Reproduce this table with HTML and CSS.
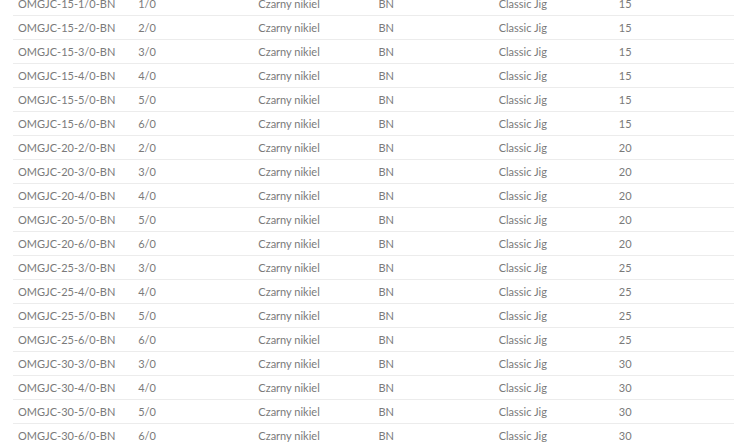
FILE: index.html
```html
<!DOCTYPE html>
<html>
<head>
<meta charset="utf-8">
<link rel="stylesheet" href="styles.css">
</head>
<body>
<table class="spec">
<tbody>
<tr><td>OMGJC-15-1/0-BN</td><td>1/0</td><td>Czarny nikiel</td><td>BN</td><td>Classic Jig</td><td>15</td></tr>
<tr><td>OMGJC-15-2/0-BN</td><td>2/0</td><td>Czarny nikiel</td><td>BN</td><td>Classic Jig</td><td>15</td></tr>
<tr><td>OMGJC-15-3/0-BN</td><td>3/0</td><td>Czarny nikiel</td><td>BN</td><td>Classic Jig</td><td>15</td></tr>
<tr><td>OMGJC-15-4/0-BN</td><td>4/0</td><td>Czarny nikiel</td><td>BN</td><td>Classic Jig</td><td>15</td></tr>
<tr><td>OMGJC-15-5/0-BN</td><td>5/0</td><td>Czarny nikiel</td><td>BN</td><td>Classic Jig</td><td>15</td></tr>
<tr><td>OMGJC-15-6/0-BN</td><td>6/0</td><td>Czarny nikiel</td><td>BN</td><td>Classic Jig</td><td>15</td></tr>
<tr><td>OMGJC-20-2/0-BN</td><td>2/0</td><td>Czarny nikiel</td><td>BN</td><td>Classic Jig</td><td>20</td></tr>
<tr><td>OMGJC-20-3/0-BN</td><td>3/0</td><td>Czarny nikiel</td><td>BN</td><td>Classic Jig</td><td>20</td></tr>
<tr><td>OMGJC-20-4/0-BN</td><td>4/0</td><td>Czarny nikiel</td><td>BN</td><td>Classic Jig</td><td>20</td></tr>
<tr><td>OMGJC-20-5/0-BN</td><td>5/0</td><td>Czarny nikiel</td><td>BN</td><td>Classic Jig</td><td>20</td></tr>
<tr><td>OMGJC-20-6/0-BN</td><td>6/0</td><td>Czarny nikiel</td><td>BN</td><td>Classic Jig</td><td>20</td></tr>
<tr><td>OMGJC-25-3/0-BN</td><td>3/0</td><td>Czarny nikiel</td><td>BN</td><td>Classic Jig</td><td>25</td></tr>
<tr><td>OMGJC-25-4/0-BN</td><td>4/0</td><td>Czarny nikiel</td><td>BN</td><td>Classic Jig</td><td>25</td></tr>
<tr><td>OMGJC-25-5/0-BN</td><td>5/0</td><td>Czarny nikiel</td><td>BN</td><td>Classic Jig</td><td>25</td></tr>
<tr><td>OMGJC-25-6/0-BN</td><td>6/0</td><td>Czarny nikiel</td><td>BN</td><td>Classic Jig</td><td>25</td></tr>
<tr><td>OMGJC-30-3/0-BN</td><td>3/0</td><td>Czarny nikiel</td><td>BN</td><td>Classic Jig</td><td>30</td></tr>
<tr><td>OMGJC-30-4/0-BN</td><td>4/0</td><td>Czarny nikiel</td><td>BN</td><td>Classic Jig</td><td>30</td></tr>
<tr><td>OMGJC-30-5/0-BN</td><td>5/0</td><td>Czarny nikiel</td><td>BN</td><td>Classic Jig</td><td>30</td></tr>
<tr><td>OMGJC-30-6/0-BN</td><td>6/0</td><td>Czarny nikiel</td><td>BN</td><td>Classic Jig</td><td>30</td></tr>
</tbody>
</table>
</body>
</html>
```
FILE: styles.css
```css
html, body {
  margin: 0;
  padding: 0;
  background: #fff;
  overflow: hidden;
}
.spec {
  border-collapse: collapse;
  margin: -8px 0 0 13px;
  width: 721px;
  table-layout: fixed;
  font-family: Lato, "Open Sans", sans-serif;
  font-size: 11px;
  color: #7a7a7a;
}
.spec td {
  width: 120px;
  height: 23px;
  padding: 0 0 0 5px;
  box-sizing: border-box;
  border-bottom: 1px solid #ececec;
  vertical-align: middle;
  white-space: nowrap;
  line-height: 23px;
}
```
